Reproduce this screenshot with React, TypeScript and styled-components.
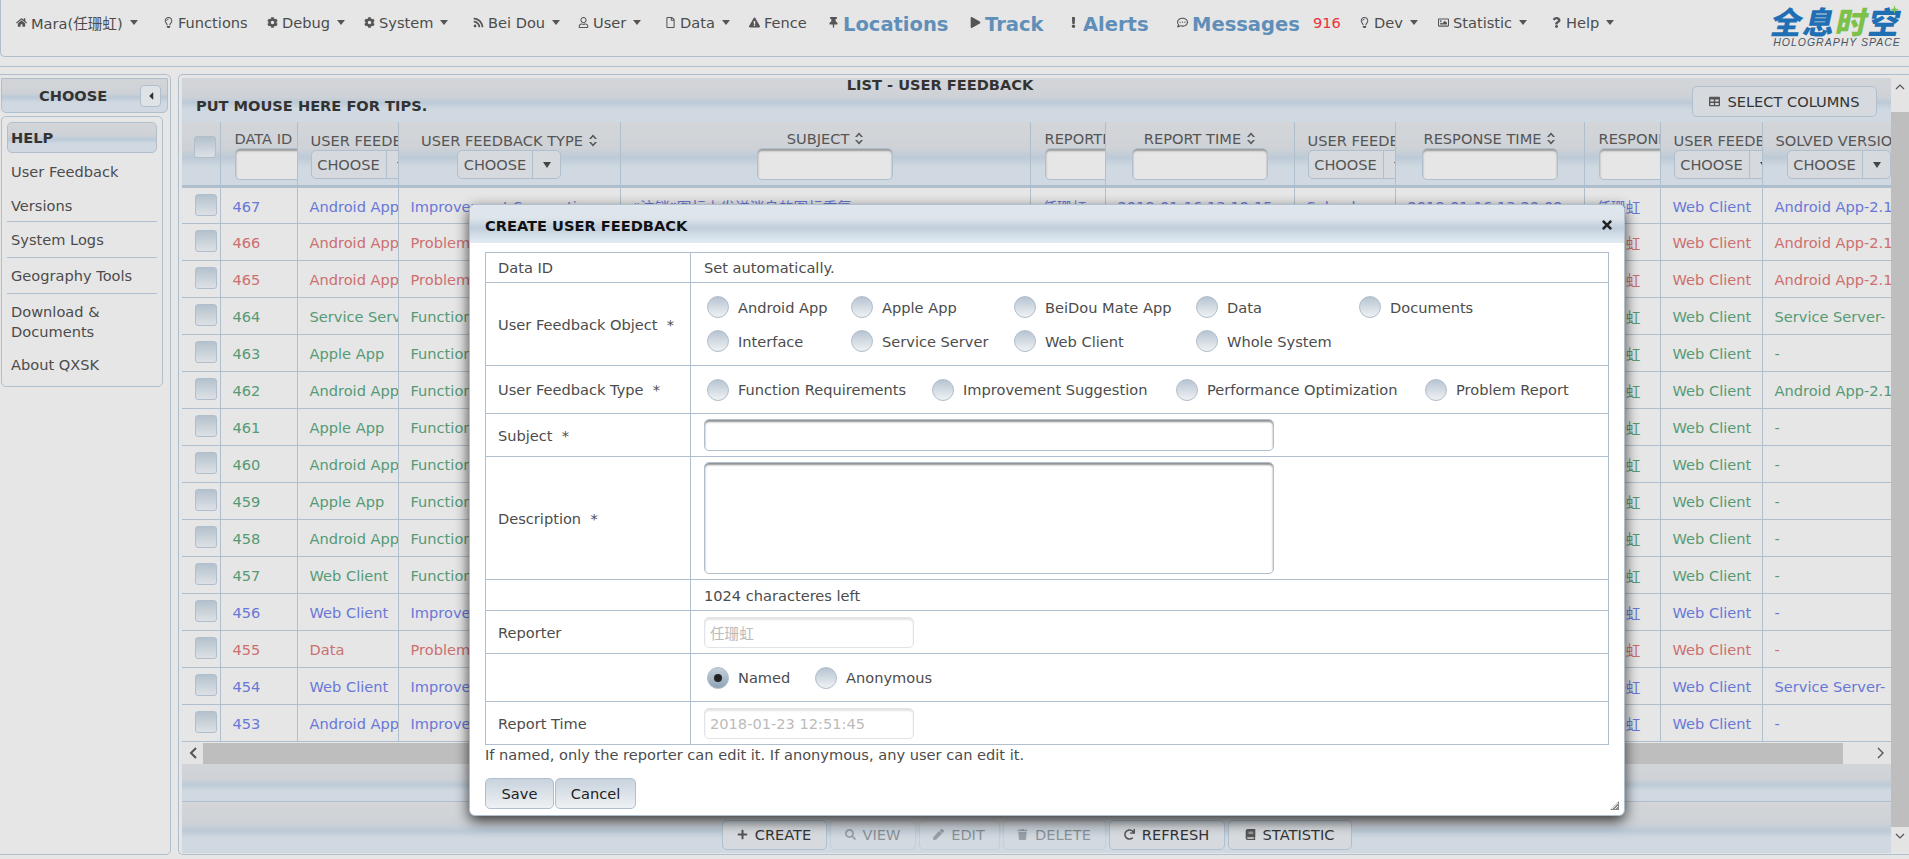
import * as React from "react"
import styled, { createGlobalStyle } from "styled-components"
import {
  FaBook,
  FaCaretLeft,
  FaCog,
  FaExclamation,
  FaExclamationTriangle,
  FaHome,
  FaPen,
  FaPlay,
  FaPlus,
  FaQuestion,
  FaRedo,
  FaRegCommentDots,
  FaRegFile,
  FaRegImage,
  FaRegLightbulb,
  FaRegUser,
  FaRss,
  FaSearch,
  FaTable,
  FaThumbtack,
  FaTimes,
  FaTrash
} from "react-icons/fa"

const line = "#b0bfcd"
const text = "#4c4c4c"
const sansStack = `"DejaVu Sans", "Noto Sans CJK SC", sans-serif`
const barGradient = `linear-gradient(#d3d5d8 0%, #ced2d7 42%, #bccad7 56%, #d0d9e1 72%, #d0d9e1 100%)`

const GlobalStyle = createGlobalStyle`
  html, body {
    margin: 0;
    height: 859px;
    overflow: hidden;
    background: #e6e6e6;
    font-family: ${sansStack};
    font-size: 14.6px;
    color: ${text};
  }
  * { box-sizing: border-box; }
`

const Page = styled.div`
  position: relative;
  width: 1909px;
  height: 859px;
  display: flex;
  flex-direction: column;
`

const TopBar = styled.header`
  height: 57px;
  flex: none;
  display: flex;
  align-items: flex-start;
  padding: 13px 0 0 15px;
  border: 1px solid ${line};
  border-width: 0 0 1px 1px;
  border-bottom-left-radius: 5px;
  position: relative;
`

const NavItem = styled.div<{ $w: number }>`
  width: ${p => p.$w}px;
  flex: none;
  height: 18px;
  display: flex;
  align-items: center;
  gap: 4px;
  white-space: nowrap;
  svg { color: #555; font-size: 11px; flex: none; }
`

const BigLink = styled.span`
  font-size: 19.5px;
  font-weight: bold;
  color: #5f8fb8;
  margin-top: 5px;
`

const Count = styled.span`
  color: #e8343c;
`

const Caret = styled.i`
  display: inline-block;
  margin-left: 3px;
  width: 0;
  height: 0;
  border: 4.5px solid transparent;
  border-top: 5px solid #555;
  border-bottom: 0;
`

const Logo = styled.div`
  position: absolute;
  left: 1770px;
  top: 6px;
  width: 132px;
  text-align: center;
`

const LogoCn = styled.div`
  font-family: "Noto Sans CJK SC", sans-serif;
  font-weight: 900;
  font-size: 31px;
  line-height: 29px;
  letter-spacing: 1.5px;
  white-space: nowrap;
  color: #1f6fb5;
  transform: skewX(-12deg);
  b { color: #7cc14a; font-weight: 900; }
`

const LogoEn = styled.div`
  font-size: 10.5px;
  line-height: 12px;
  margin-top: 1px;
  font-style: italic;
  color: #4a5560;
  letter-spacing: 1px;
  white-space: nowrap;
  font-family: "Liberation Sans", sans-serif;
`

const LogoStar = styled.svg`
  position: absolute;
  right: 4px;
  top: -1px;
`

const Strip = styled.div`
  height: 10px;
  flex: none;
  border-bottom: 1px solid ${line};
`

const Body = styled.div`
  flex: none;
  height: 788px;
  padding-top: 7px;
  display: flex;
  gap: 7px;
`

const SidePanel = styled.aside`
  width: 172px;
  height: 781px;
  margin-left: -1px;
  flex: none;
  padding: 3px 4px 0 1px;
  border: 1px solid ${line};
  border-radius: 0 5px 5px 0;
`

const ChooseBar = styled.div`
  height: 35px;
  width: 167px;
  margin-right: -4px;
  border: 1px solid ${line};
  border-radius: 0 0 5px 5px;
  background: ${barGradient};
  display: flex;
  align-items: center;
  font-weight: bold;
  color: #333;
  padding: 0 6px 0 37px;
  justify-content: space-between;
`

const CollapseButton = styled.button`
  width: 21px;
  height: 22px;
  padding: 0;
  border: 1px solid ${line};
  border-radius: 4px;
  background: #dfe3e6;
  color: #333;
  display: flex;
  align-items: center;
  justify-content: center;
  font-size: 12px;
`

const Menu = styled.nav`
  margin-top: 3px;
  width: 162px;
  height: 271px;
  padding: 5px 5px 0;
  border: 1px solid ${line};
  border-radius: 5px;
`

const MenuHead = styled.div`
  height: 31px;
  line-height: 29px;
  padding-left: 3px;
  font-weight: bold;
  color: #333;
  border: 1px solid ${line};
  border-radius: 5px;
  background: ${barGradient};
`

const MenuItem = styled.div<{ $split?: boolean; $h: number }>`
  height: ${p => p.$h}px;
  padding-left: 4px;
  display: flex;
  align-items: center;
  line-height: 20px;
  border-bottom: ${p => (p.$split ? `1px solid ${line}` : "0")};
`

const MainPanel = styled.main`
  flex: 1;
  height: 781px;
  padding: 3px 0 1px 3px;
  border: 1px solid ${line};
  border-right: 0;
  border-radius: 5px 0 0 5px;
  display: flex;
  min-width: 0;
`

const ListPanel = styled.section`
  width: 1709px;
  flex: none;
  display: flex;
  flex-direction: column;
`

const ListHeader = styled.div`
  height: 44px;
  flex: none;
  display: grid;
  grid-template-rows: 14px 30px;
  background: ${barGradient};
`

const ListTitle = styled.div`
  grid-row: 1;
  grid-column: 1;
  padding-right: 193px;
  text-align: center;
  font-weight: bold;
  line-height: 14px;
  color: #333;
`

const Tips = styled.div`
  grid-row: 2;
  grid-column: 1;
  padding: 5px 0 0 14px;
  font-weight: bold;
  color: #333;
`

const SelectColumns = styled.button`
  grid-row: 1 / 3;
  grid-column: 1;
  justify-self: end;
  align-self: start;
  margin: 8px 14px 0 0;
  width: 185px;
  height: 31px;
  display: flex;
  align-items: center;
  justify-content: center;
  gap: 7px;
  border: 1px solid ${line};
  border-radius: 5px;
  background: #d6dade;
  font: 14.6px ${sansStack};
  color: #333;
  svg { color: #555; font-size: 11px; }
`

const Grid = styled.table`
  width: 1709px;
  table-layout: fixed;
  border-collapse: collapse;
  flex: none;
`

const Head = styled.th`
  height: 64px;
  padding: 8px 1px 0;
  vertical-align: top;
  overflow: hidden;
  white-space: nowrap;
  text-align: center;
  font-weight: normal;
  color: #555;
  background: ${barGradient};
  border-right: 1px solid ${line};
  border-bottom: 3px solid ${line};
`

const CheckHead = styled(Head)`
  padding: 0;
`

const Cell = styled.td<{ $tone: string }>`
  height: 37px;
  padding: 2px 0 0 12px;
  overflow: hidden;
  white-space: nowrap;
  color: ${p => p.$tone};
  border-right: 1px solid ${line};
  border-bottom: 1px solid ${line};
`

const CheckCell = styled.td`
  height: 37px;
  padding: 6px 0 0 13px;
  vertical-align: top;
  border-right: 1px solid ${line};
  border-bottom: 1px solid ${line};
`

const Check = styled.span<{ $inHead?: boolean }>`
  display: block;
  width: 22px;
  height: 22px;
  margin: ${p => (p.$inHead ? "14px 0 0 12px" : "0")};
  border: 1px solid ${line};
  border-radius: 3px;
  background: linear-gradient(#b4c1cd, #dde1e5);
`

const SortIcon = styled.svg`
  margin-left: 6px;
  vertical-align: -1px;
`

const FilterInput = styled.input`
  display: block;
  width: 136px;
  height: 32px;
  margin: 0 auto;
  border: 1px solid ${line};
  border-radius: 5px;
  background: #e6e6e6;
  box-shadow: inset 0 2px 2px #9a9a9a;
  flex: none;
`

const FilterWrap = styled.div<{ $left?: boolean }>`
  margin-top: 1px;
  display: flex;
  justify-content: ${p => (p.$left ? "flex-start" : "center")};
  padding-left: ${p => (p.$left ? "13px" : "0")};
`

const ChooseSelect = styled.div`
  margin-top: 1px;
  width: 104px;
  height: 29px;
  flex: none;
  display: flex;
  align-items: center;
  border: 1px solid ${line};
  border-radius: 5px;
  background: #d6dade;
  color: #555;
`

const ChooseLabel = styled.span`
  width: 75px;
  line-height: 27px;
  text-align: center;
  border-right: 1px solid ${line};
`

const ChooseArrow = styled.i`
  margin-left: 10px;
  width: 0;
  height: 0;
  border: 4.5px solid transparent;
  border-top: 6px solid #444;
  border-bottom: 0;
`

const SelectWrap = styled.div<{ $inset?: number }>`
  display: flex;
  justify-content: ${p => (p.$inset ? "flex-start" : "center")};
  padding-left: ${p => p.$inset || 0}px;
`

const HeadLabel = styled.div<{ $low?: boolean; $left?: boolean }>`
  line-height: 16px;
  margin-top: ${p => (p.$low ? "3px" : "1px")};
  text-align: ${p => (p.$left ? "left" : "center")};
  padding-left: ${p => (p.$left ? (p.$low ? "12px" : "13px") : "0")};
`

const HScroll = styled.div`
  flex: none;
  height: 21px;
  margin-top: 1px;
  display: flex;
  align-items: stretch;
  background: #e4e4e4;
`

const ScrollArrow = styled.div<{ $w: number; $end?: boolean }>`
  width: ${p => p.$w}px;
  flex: none;
  display: flex;
  align-items: center;
  justify-content: ${p => (p.$end ? "flex-end" : "center")};
  padding-right: ${p => (p.$end ? "6px" : "0")};
`

const HThumb = styled.div`
  width: 1640px;
  flex: none;
  background: #bebebe;
`

const FooterTop = styled.div`
  height: 38px;
  flex: none;
  background: ${barGradient};
  border-bottom: 1px solid ${line};
`

const FooterBar = styled.div`
  height: 51px;
  flex: none;
  display: flex;
  justify-content: center;
  align-items: flex-end;
  gap: 3px;
  padding-bottom: 3px;
  background: ${barGradient};
`

const ToolButton = styled.button<{ $w: number; $off?: boolean }>`
  width: ${p => p.$w}px;
  height: 30px;
  padding: 0;
  display: flex;
  align-items: center;
  justify-content: center;
  gap: 7px;
  border: 1px solid ${line};
  border-radius: 5px;
  background: #d6dade;
  font: 14.6px ${sansStack};
  color: #333;
  opacity: ${p => (p.$off ? 0.42 : 1)};
  svg { font-size: 11px; color: #555; }
`

const VScroll = styled.div`
  flex: 1;
  height: 774px;
  display: flex;
  flex-direction: column;
  background: #e4e4e4;
`

const VThumb = styled.div`
  height: 715px;
  flex: none;
  background: #bebebe;
`

const VArrow = styled.div<{ $h: number }>`
  height: ${p => p.$h}px;
  flex: none;
  display: flex;
  justify-content: center;
  padding-top: 5px;
`

const Modal = styled.div`
  position: absolute;
  left: 469px;
  top: 204px;
  width: 1156px;
  height: 612px;
  background: #fff;
  border: 1px solid ${line};
  border-radius: 6px;
  box-shadow: 0 5px 14px rgba(0, 0, 0, 0.75);
`

const ModalTitle = styled.div`
  height: 38px;
  display: flex;
  align-items: center;
  justify-content: space-between;
  padding: 2px 10px 0 15px;
  border-radius: 5px 5px 0 0;
  font-weight: bold;
  color: #111;
  background: linear-gradient(#e0e6ed 0%, #dde4ea 35%, #c0cedb 60%, #e0e9f2 95%);
  svg { color: #222; font-size: 14px; }
`

const FormTable = styled.table`
  margin: 9px 0 0 15px;
  width: 1124px;
  table-layout: fixed;
  border-collapse: collapse;
`

const FormRow = styled.tr<{ $h: number }>`
  height: ${p => p.$h}px;
`

const FormLabel = styled.td`
  width: 205px;
  padding: 0 0 0 12px;
  border: 1px solid ${line};
  white-space: nowrap;
`

const FormValue = styled.td`
  padding: 0 0 0 13px;
  border: 1px solid ${line};
  white-space: nowrap;
`

const RadioGrid = styled.div<{ $cols: string }>`
  display: grid;
  grid-template-columns: ${p => p.$cols};
  row-gap: 12px;
  margin-left: 3px;
`

const RadioOption = styled.label`
  display: flex;
  align-items: center;
  gap: 9px;
  height: 22px;
`

const RadioDot = styled.span<{ $on?: boolean }>`
  width: 22px;
  height: 22px;
  flex: none;
  border: 1px solid ${line};
  border-radius: 50%;
  display: flex;
  align-items: center;
  justify-content: center;
  background: ${p =>
    p.$on ? "linear-gradient(#c4d0da, #8ea2b5)" : "linear-gradient(#b6c4d1, #f0f2f4)"};
  &::after {
    content: "";
    display: ${p => (p.$on ? "block" : "none")};
    width: 8px;
    height: 8px;
    border-radius: 50%;
    background: #222;
  }
`

const TextField = styled.input<{ $w: number; $h: number }>`
  display: block;
  width: ${p => p.$w}px;
  height: ${p => p.$h}px;
  border: 1px solid ${line};
  border-radius: 5px;
  background: #fff;
  box-shadow: inset 0 2px 2px #8f8f8f;
`

const AreaField = styled.textarea`
  display: block;
  width: 570px;
  height: 112px;
  resize: none;
  border: 1px solid ${line};
  border-radius: 5px;
  background: #fff;
  box-shadow: inset 0 2px 2px #8f8f8f;
`

const LockedField = styled.input`
  display: block;
  width: 210px;
  height: 31px;
  padding: 0 5px;
  border: 1px solid #e0e4e8;
  border-radius: 5px;
  background: #fff;
  box-shadow: inset 0 2px 2px #e4e4e4;
  font: 14.6px ${sansStack};
  color: #bbb;
`

const Note = styled.div`
  padding: 1px 0 0 15px;
  line-height: 18px;
`

const ModalActions = styled.div`
  display: flex;
  gap: 1px;
  padding: 14px 0 0 15px;
`

const ModalButton = styled.button<{ $w: number }>`
  width: ${p => p.$w}px;
  height: 31px;
  padding: 0;
  border: 1px solid ${line};
  border-radius: 5px;
  background: linear-gradient(#c8d3dd, #eef1f4);
  font: 14.6px ${sansStack};
  color: #222;
`

const Resize = styled.svg`
  position: absolute;
  right: 4px;
  bottom: 4px;
`

const blue = "#6878d6"
const red = "#cc6f6f"
const green = "#559a75"

const navItems: { w: number; icon: React.ReactNode; label: string; caret?: boolean; big?: boolean }[] = [
  { w: 147, icon: <FaHome />, label: "Mara(任珊虹)", caret: true },
  { w: 104, icon: <FaRegLightbulb />, label: "Functions" },
  { w: 97, icon: <FaCog />, label: "Debug", caret: true },
  { w: 109, icon: <FaCog />, label: "System", caret: true },
  { w: 105, icon: <FaRss />, label: "Bei Dou", caret: true },
  { w: 87, icon: <FaRegUser />, label: "User", caret: true },
  { w: 84, icon: <FaRegFile />, label: "Data", caret: true },
  { w: 79, icon: <FaExclamationTriangle />, label: "Fence" },
  { w: 142, icon: <FaThumbtack />, label: "Locations", big: true },
  { w: 98, icon: <FaPlay />, label: "Track", big: true },
  { w: 109, icon: <FaExclamation />, label: "Alerts", big: true },
  { w: 136, icon: <FaRegCommentDots />, label: "Messages", big: true }
]

const navTail: { w: number; icon: React.ReactNode; label: string }[] = [
  { w: 79, icon: <FaRegLightbulb />, label: "Dev" },
  { w: 113, icon: <FaRegImage />, label: "Statistic" },
  { w: 80, icon: <FaQuestion />, label: "Help" }
]

const rows = [
  ["467", "Android App", "Improvement Suggestion", blue, "Android App-2.1"],
  ["466", "Android App", "Problem Report", red, "Android App-2.1"],
  ["465", "Android App", "Problem Report", red, "Android App-2.1"],
  ["464", "Service Server", "Function Requirements", green, "Service Server-"],
  ["463", "Apple App", "Function Requirements", green, "-"],
  ["462", "Android App", "Function Requirements", green, "Android App-2.1"],
  ["461", "Apple App", "Function Requirements", green, "-"],
  ["460", "Android App", "Function Requirements", green, "-"],
  ["459", "Apple App", "Function Requirements", green, "-"],
  ["458", "Android App", "Function Requirements", green, "-"],
  ["457", "Web Client", "Function Requirements", green, "-"],
  ["456", "Web Client", "Improvement Suggestion", blue, "-"],
  ["455", "Data", "Problem Report", red, "-"],
  ["454", "Web Client", "Improvement Suggestion", blue, "Service Server-"],
  ["453", "Android App", "Improvement Suggestion", blue, "-"]
]

const columnWidths = [38, 77, 101, 222, 410, 75, 189, 101, 189, 76, 102, 129]

const Sort = () => (
  <SortIcon width="8" height="13" viewBox="0 0 8 13">
    <path d="M4 0.5 8 5H6L4 2.8 2 5H0zM4 12.5 0 8h2l2 2.2L6 8h2z" fill="#555" />
  </SortIcon>
)

const Choose = ({ inset }: { inset?: number }) => (
  <SelectWrap $inset={inset}>
    <ChooseSelect>
      <ChooseLabel>CHOOSE</ChooseLabel>
      <ChooseArrow />
    </ChooseSelect>
  </SelectWrap>
)

const Radio = ({ label, on }: { label: string; on?: boolean }) => (
  <RadioOption>
    <RadioDot $on={on} />
    {label}
  </RadioOption>
)

export default function App() {
  return (
    <Page>
      <GlobalStyle />
      <TopBar>
        {navItems.map(item => (
          <NavItem key={item.label} $w={item.w}>
            {item.icon}
            {item.big ? <BigLink>{item.label}</BigLink> : item.label}
            {item.caret && <Caret />}
          </NavItem>
        ))}
        <NavItem $w={46}>
          <Count>916</Count>
        </NavItem>
        {navTail.map(item => (
          <NavItem key={item.label} $w={item.w}>
            {item.icon}
            {item.label}
            <Caret />
          </NavItem>
        ))}
        <Logo>
          <LogoCn>
            全息<b>时</b>空
          </LogoCn>
          <LogoEn>HOLOGRAPHY SPACE</LogoEn>
          <LogoStar width="9" height="9" viewBox="0 0 10 10">
            <path d="M5 0 6 4 10 5 6 6 5 10 4 6 0 5 4 4z" fill="#7cc14a" />
          </LogoStar>
        </Logo>
      </TopBar>
      <Strip />
      <Body>
        <SidePanel>
          <ChooseBar>
            CHOOSE
            <CollapseButton>
              <FaCaretLeft />
            </CollapseButton>
          </ChooseBar>
          <Menu>
            <MenuHead>HELP</MenuHead>
            <MenuItem $h={38}>User Feedback</MenuItem>
            <MenuItem $h={31} $split>Versions</MenuItem>
            <MenuItem $h={36} $split>System Logs</MenuItem>
            <MenuItem $h={36} $split>Geography Tools</MenuItem>
            <MenuItem $h={56}>
              Download &amp;
              <br />
              Documents
            </MenuItem>
            <MenuItem $h={30}>About QXSK</MenuItem>
          </Menu>
        </SidePanel>
        <MainPanel>
          <ListPanel>
            <ListHeader>
              <ListTitle>LIST - USER FEEDBACK</ListTitle>
              <Tips>PUT MOUSE HERE FOR TIPS.</Tips>
              <SelectColumns>
                <FaTable />
                SELECT COLUMNS
              </SelectColumns>
            </ListHeader>
            <Grid>
              <colgroup>
                {columnWidths.map((w, i) => (
                  <col key={i} width={w} />
                ))}
              </colgroup>
              <thead>
                <tr>
                  <CheckHead>
                    <Check $inHead />
                  </CheckHead>
                  <Head>
                    <HeadLabel $left>DATA ID</HeadLabel>
                    <FilterWrap $left>
                      <FilterInput />
                    </FilterWrap>
                  </Head>
                  <Head>
                    <HeadLabel $low $left>USER FEEDBACK OBJECT</HeadLabel>
                    <Choose inset={12} />
                  </Head>
                  <Head>
                    <HeadLabel $low>
                      USER FEEDBACK TYPE
                      <Sort />
                    </HeadLabel>
                    <Choose />
                  </Head>
                  <Head>
                    <HeadLabel>
                      SUBJECT
                      <Sort />
                    </HeadLabel>
                    <FilterWrap>
                      <FilterInput />
                    </FilterWrap>
                  </Head>
                  <Head>
                    <HeadLabel $left>REPORTER</HeadLabel>
                    <FilterWrap $left>
                      <FilterInput />
                    </FilterWrap>
                  </Head>
                  <Head>
                    <HeadLabel>
                      REPORT TIME
                      <Sort />
                    </HeadLabel>
                    <FilterWrap>
                      <FilterInput />
                    </FilterWrap>
                  </Head>
                  <Head>
                    <HeadLabel $low $left>USER FEEDBACK STATUS</HeadLabel>
                    <Choose inset={12} />
                  </Head>
                  <Head>
                    <HeadLabel>
                      RESPONSE TIME
                      <Sort />
                    </HeadLabel>
                    <FilterWrap>
                      <FilterInput />
                    </FilterWrap>
                  </Head>
                  <Head>
                    <HeadLabel $left>RESPONDER</HeadLabel>
                    <FilterWrap $left>
                      <FilterInput />
                    </FilterWrap>
                  </Head>
                  <Head>
                    <HeadLabel $low $left>USER FEEDBACK CLIENT</HeadLabel>
                    <Choose inset={12} />
                  </Head>
                  <Head>
                    <HeadLabel $low $left>SOLVED VERSION</HeadLabel>
                    <Choose inset={23} />
                  </Head>
                </tr>
              </thead>
              <tbody>
                {rows.map(([id, object, type, tone, version], i) => (
                  <tr key={id}>
                    <CheckCell>
                      <Check />
                    </CheckCell>
                    <Cell $tone={tone}>{id}</Cell>
                    <Cell $tone={tone}>{object}</Cell>
                    <Cell $tone={tone}>{type}</Cell>
                    <Cell $tone={tone}>{i === 0 && "“注销”图标上发送消息的图标重复"}</Cell>
                    <Cell $tone={tone}>{i === 0 && "任珊虹"}</Cell>
                    <Cell $tone={tone}>{i === 0 && "2018-01-16 13:19:15"}</Cell>
                    <Cell $tone={tone}>{i === 0 && "Solved"}</Cell>
                    <Cell $tone={tone}>{i === 0 && "2018-01-16 13:20:09"}</Cell>
                    <Cell $tone={tone}>任珊虹</Cell>
                    <Cell $tone={tone}>Web Client</Cell>
                    <Cell $tone={tone}>{version}</Cell>
                  </tr>
                ))}
              </tbody>
            </Grid>
            <HScroll>
              <ScrollArrow $w={21}>
                <svg width="8" height="12" viewBox="0 0 8 12">
                  <path d="M7 1 2 6l5 5" fill="none" stroke="#555" strokeWidth="2" />
                </svg>
              </ScrollArrow>
              <HThumb />
              <ScrollArrow $w={48} $end>
                <svg width="8" height="12" viewBox="0 0 8 12">
                  <path d="M1 1l5 5-5 5" fill="none" stroke="#555" strokeWidth="1.4" />
                </svg>
              </ScrollArrow>
            </HScroll>
            <FooterTop />
            <FooterBar>
              <ToolButton $w={105}>
                <FaPlus />
                CREATE
              </ToolButton>
              <ToolButton $w={86} $off>
                <FaSearch />
                VIEW
              </ToolButton>
              <ToolButton $w={81} $off>
                <FaPen />
                EDIT
              </ToolButton>
              <ToolButton $w={103} $off>
                <FaTrash />
                DELETE
              </ToolButton>
              <ToolButton $w={116}>
                <FaRedo />
                REFRESH
              </ToolButton>
              <ToolButton $w={124}>
                <FaBook />
                STATISTIC
              </ToolButton>
            </FooterBar>
          </ListPanel>
          <VScroll>
            <VArrow $h={34}>
              <svg width="10" height="8" viewBox="0 0 10 8">
                <path d="M1 6l4-4 4 4" fill="none" stroke="#555" strokeWidth="1.2" />
              </svg>
            </VArrow>
            <VThumb />
            <VArrow $h={25}>
              <svg width="10" height="8" viewBox="0 0 10 8">
                <path d="M1 2l4 4 4-4" fill="none" stroke="#555" strokeWidth="1.2" />
              </svg>
            </VArrow>
          </VScroll>
        </MainPanel>
      </Body>
      <Modal>
        <ModalTitle>
          CREATE USER FEEDBACK
          <FaTimes />
        </ModalTitle>
        <FormTable>
          <tbody>
            <FormRow $h={30}>
              <FormLabel>Data ID</FormLabel>
              <FormValue>Set automatically.</FormValue>
            </FormRow>
            <FormRow $h={83}>
              <FormLabel>User Feedback Object{"\u00a0 "}*</FormLabel>
              <FormValue>
                <RadioGrid $cols="144px 163px 182px 163px auto">
                  <Radio label="Android App" />
                  <Radio label="Apple App" />
                  <Radio label="BeiDou Mate App" />
                  <Radio label="Data" />
                  <Radio label="Documents" />
                  <Radio label="Interface" />
                  <Radio label="Service Server" />
                  <Radio label="Web Client" />
                  <Radio label="Whole System" />
                </RadioGrid>
              </FormValue>
            </FormRow>
            <FormRow $h={48}>
              <FormLabel>User Feedback Type{"\u00a0 "}*</FormLabel>
              <FormValue>
                <RadioGrid $cols="225px 244px 249px auto">
                  <Radio label="Function Requirements" />
                  <Radio label="Improvement Suggestion" />
                  <Radio label="Performance Optimization" />
                  <Radio label="Problem Report" />
                </RadioGrid>
              </FormValue>
            </FormRow>
            <FormRow $h={43}>
              <FormLabel>Subject{"\u00a0 "}*</FormLabel>
              <FormValue>
                <TextField $w={570} $h={32} />
              </FormValue>
            </FormRow>
            <FormRow $h={123}>
              <FormLabel>Description{"\u00a0 "}*</FormLabel>
              <FormValue>
                <AreaField />
              </FormValue>
            </FormRow>
            <FormRow $h={31}>
              <FormLabel />
              <FormValue>1024 characteres left</FormValue>
            </FormRow>
            <FormRow $h={43}>
              <FormLabel>Reporter</FormLabel>
              <FormValue>
                <LockedField readOnly value="任珊虹" />
              </FormValue>
            </FormRow>
            <FormRow $h={48}>
              <FormLabel />
              <FormValue>
                <RadioGrid $cols="108px auto">
                  <Radio label="Named" on />
                  <Radio label="Anonymous" />
                </RadioGrid>
              </FormValue>
            </FormRow>
            <FormRow $h={43}>
              <FormLabel>Report Time</FormLabel>
              <FormValue>
                <LockedField readOnly value="2018-01-23 12:51:45" />
              </FormValue>
            </FormRow>
          </tbody>
        </FormTable>
        <Note>If named, only the reporter can edit it. If anonymous, any user can edit it.</Note>
        <ModalActions>
          <ModalButton $w={69}>Save</ModalButton>
          <ModalButton $w={81}>Cancel</ModalButton>
        </ModalActions>
        <Resize width="11" height="11" viewBox="0 0 11 11">
          <path d="M10 1v9H1zM10 5v5H5z" fill="#8a8a8a" />
          <path d="M9 3 3 9M9 6 6 9" stroke="#fff" strokeWidth="0.8" />
        </Resize>
      </Modal>
    </Page>
  )
}
